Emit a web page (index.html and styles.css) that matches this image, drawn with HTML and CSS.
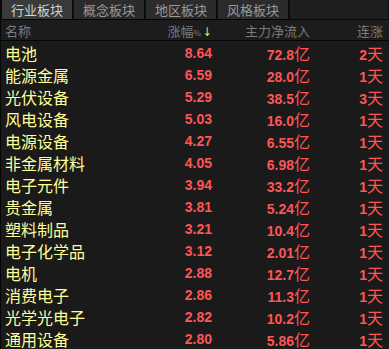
FILE: index.html
```html
<!DOCTYPE html>
<html>
<head>
<meta charset="utf-8">
<link rel="stylesheet" href="styles.css">
</head>
<body>
<div class="panel">
  <div class="tabs">
    <div class="tab active">行业板块</div>
    <div class="tab">概念板块</div>
    <div class="tab">地区板块</div>
    <div class="tab">风格板块</div>
    <div class="tab-fill"></div>
  </div>
  <div class="head">
    <span class="c-name">名称</span>
    <span class="c-chg">涨幅<small>%</small><span class="arrow">↓</span></span>
    <span class="c-flow">主力净流入</span>
    <span class="c-days">连涨</span>
  </div>
  <div class="rows">
    <div class="row"><span class="c-name">电池</span><span class="c-chg num">8.64</span><span class="c-flow"><b class="num">72.8</b>亿</span><span class="c-days"><b class="num">2</b>天</span></div>
    <div class="row"><span class="c-name">能源金属</span><span class="c-chg num">6.59</span><span class="c-flow"><b class="num">28.0</b>亿</span><span class="c-days"><b class="num">1</b>天</span></div>
    <div class="row"><span class="c-name">光伏设备</span><span class="c-chg num">5.29</span><span class="c-flow"><b class="num">38.5</b>亿</span><span class="c-days"><b class="num">3</b>天</span></div>
    <div class="row"><span class="c-name">风电设备</span><span class="c-chg num">5.03</span><span class="c-flow"><b class="num">16.0</b>亿</span><span class="c-days"><b class="num">1</b>天</span></div>
    <div class="row"><span class="c-name">电源设备</span><span class="c-chg num">4.27</span><span class="c-flow"><b class="num">6.55</b>亿</span><span class="c-days"><b class="num">1</b>天</span></div>
    <div class="row"><span class="c-name">非金属材料</span><span class="c-chg num">4.05</span><span class="c-flow"><b class="num">6.98</b>亿</span><span class="c-days"><b class="num">1</b>天</span></div>
    <div class="row"><span class="c-name">电子元件</span><span class="c-chg num">3.94</span><span class="c-flow"><b class="num">33.2</b>亿</span><span class="c-days"><b class="num">1</b>天</span></div>
    <div class="row"><span class="c-name">贵金属</span><span class="c-chg num">3.81</span><span class="c-flow"><b class="num">5.24</b>亿</span><span class="c-days"><b class="num">1</b>天</span></div>
    <div class="row"><span class="c-name">塑料制品</span><span class="c-chg num">3.21</span><span class="c-flow"><b class="num">10.4</b>亿</span><span class="c-days"><b class="num">1</b>天</span></div>
    <div class="row"><span class="c-name">电子化学品</span><span class="c-chg num">3.12</span><span class="c-flow"><b class="num">2.01</b>亿</span><span class="c-days"><b class="num">1</b>天</span></div>
    <div class="row"><span class="c-name">电机</span><span class="c-chg num">2.88</span><span class="c-flow"><b class="num">12.7</b>亿</span><span class="c-days"><b class="num">1</b>天</span></div>
    <div class="row"><span class="c-name">消费电子</span><span class="c-chg num">2.86</span><span class="c-flow"><b class="num">11.3</b>亿</span><span class="c-days"><b class="num">1</b>天</span></div>
    <div class="row"><span class="c-name">光学光电子</span><span class="c-chg num">2.82</span><span class="c-flow"><b class="num">10.2</b>亿</span><span class="c-days"><b class="num">1</b>天</span></div>
    <div class="row"><span class="c-name">通用设备</span><span class="c-chg num">2.80</span><span class="c-flow"><b class="num">5.86</b>亿</span><span class="c-days"><b class="num">1</b>天</span></div>
  </div>
</div>
</body>
</html>
```

FILE: styles.css
```css
* { box-sizing: border-box; }
html, body {
  margin: 0;
  padding: 0;
  background: #1a1a1a;
  width: 389px;
  height: 349px;
  overflow: hidden;
  font-family: "Noto Sans CJK SC", "Noto Sans", sans-serif;
}
.panel {
  display: flex;
  flex-direction: column;
  border-left: 1px solid #050505;
  height: 349px;
}
.tabs {
  display: flex;
  gap: 0;
  height: 20px;
  background: #0c0c0c;
  border-bottom: 1px solid #050505;
}
.tab {
  width: 72px;
  height: 19px;
  background: #2b2b2b;
  color: #9a9a9a;
  font-size: 13px;
  line-height: 19px;
  text-align: center;
  border-left: 1px solid #0c0c0c;
  border-right: 1px solid #0c0c0c;
}
.tab.active {
  background: #3a3a3a;
  color: #d2d2d2;
}
.tab-fill {
  flex: 1;
  height: 19px;
  background: #1f1f1f;
  border-left: 1px solid #0c0c0c;
  border-right: 1px solid #0c0c0c;
}
.head, .row {
  display: grid;
  grid-template-columns: 1fr 61px 98px 73px;
  padding: 0 6px 0 4px;
  align-items: center;
}
.head {
  height: 22px;
  background: #1c1c1c;
  color: #7a7a7a;
  font-size: 13px;
  border-bottom: 1px solid #050505;
}
.head small { font-size: 8px; }
.arrow {
  color: #f0f080;
  font-family: "DejaVu Sans", sans-serif;
  font-size: 12px;
  display: inline-block;
  transform: scaleX(0.8);
  margin-left: 1px;
}
.row {
  height: 22px;
  color: #ff5555;
  font-size: 16px;
}
.c-name { text-align: left; }
.row .c-name { color: #ffff99; }
.c-chg, .c-flow, .c-days { text-align: right; white-space: nowrap; }
.num {
  font-family: "Liberation Sans", Arial, sans-serif;
  font-weight: bold;
  font-size: 14px;
}
```
